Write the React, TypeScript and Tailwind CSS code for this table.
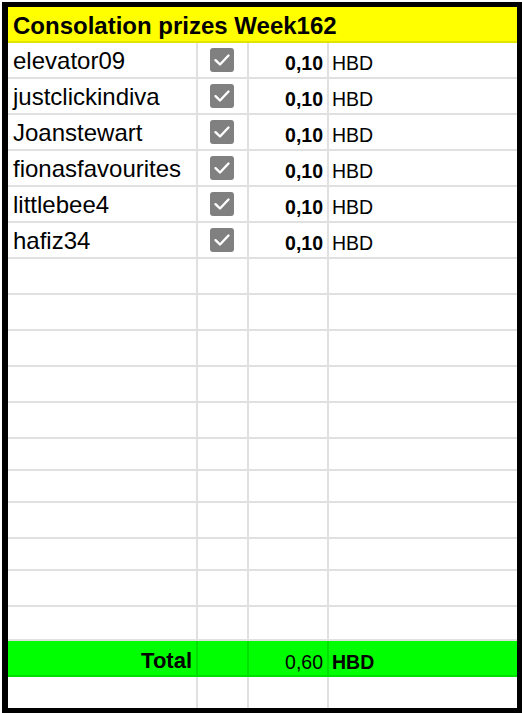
import React from "react";

const rows = [
  "elevator09",
  "justclickindiva",
  "Joanstewart",
  "fionasfavourites",
  "littlebee4",
  "hafiz34",
];

const emptyHeights = [
  "h-[36px]",
  "h-[36px]",
  "h-[36px]",
  "h-[36px]",
  "h-[36px]",
  "h-[32px]",
  "h-[32px]",
  "h-[36px]",
  "h-[32px]",
  "h-[36px]",
  "h-[34px]",
];

function Check() {
  return (
    <div className="w-[24px] h-[24px] rounded-[3px] bg-[#808080] flex items-center justify-center">
      <svg width="24" height="24" viewBox="0 0 24 24" fill="none">
        <path d="M5.5 12.2 L10 16.5 L18.5 7.5" stroke="#ffffff" strokeWidth="2.4" strokeLinecap="round" strokeLinejoin="round" />
      </svg>
    </div>
  );
}

const font = { fontFamily: '"Liberation Sans", Arial, sans-serif' };

export default function App() {
  return (
    <div className="w-[522px] h-[713px] bg-white overflow-hidden" style={font}>
      <div className="ml-[2px] mt-[2px] w-[520px] h-[711px] border-black border-l-[6px] border-t-[5px] border-r-[5px] border-b-[5px] flex flex-col overflow-hidden">
        <div className="h-[36px] shrink-0 bg-[#ffff00] border-b-2 border-[#e3e300] flex items-end pl-[5px] pb-[3px]">
          <span className="text-[24px] leading-none font-bold text-black">Consolation prizes Week162</span>
        </div>
        {rows.map((name) => (
          <div key={name} className="h-[36px] shrink-0 grid grid-cols-[190px_51px_80px_1fr] border-b-2 border-[#e0e0e0]">
            <div className="border-r-2 border-[#e0e0e0] flex items-end pl-[5px] pb-[4px]">
              <span className="text-[24px] leading-none text-black">{name}</span>
            </div>
            <div className="border-r-2 border-[#e0e0e0] flex items-center justify-center pr-[1px]">
              <Check />
            </div>
            <div className="border-r-2 border-[#e0e0e0] flex items-end justify-end pr-[4px] pb-[4px]">
              <span className="text-[19.5px] leading-none font-bold text-black">0,10</span>
            </div>
            <div className="flex items-end pl-[3px] pb-[4px]">
              <span className="text-[19.5px] leading-none text-black">HBD</span>
            </div>
          </div>
        ))}
        {emptyHeights.map((h, i) => (
          <div key={i} className={`${h} shrink-0 grid grid-cols-[190px_51px_80px_1fr] border-b-2 border-[#e0e0e0]`}>
            <div className="border-r-2 border-[#e0e0e0]" />
            <div className="border-r-2 border-[#e0e0e0]" />
            <div className="border-r-2 border-[#e0e0e0]" />
            <div />
          </div>
        ))}
        <div className="h-[36px] shrink-0 grid grid-cols-[190px_51px_80px_1fr] bg-[#00ff00] border-b-2 border-[#00e000]">
          <div className="border-r-2 border-[#00e000] flex items-end justify-end pr-[4px] pb-[3px]">
            <span className="text-[22px] leading-none font-bold text-black">Total</span>
          </div>
          <div className="border-r-2 border-[#00e000]" />
          <div className="border-r-2 border-[#00e000] flex items-end justify-end pr-[4px] pb-[3px]">
            <span className="text-[19.5px] leading-none text-black">0,60</span>
          </div>
          <div className="flex items-end pl-[3px] pb-[3px]">
            <span className="text-[19.5px] leading-none font-bold text-black">HBD</span>
          </div>
        </div>
        <div className="flex-1 grid grid-cols-[190px_51px_80px_1fr]">
          <div className="border-r-2 border-[#e0e0e0]" />
          <div className="border-r-2 border-[#e0e0e0]" />
          <div className="border-r-2 border-[#e0e0e0]" />
          <div />
        </div>
      </div>
    </div>
  );
}
